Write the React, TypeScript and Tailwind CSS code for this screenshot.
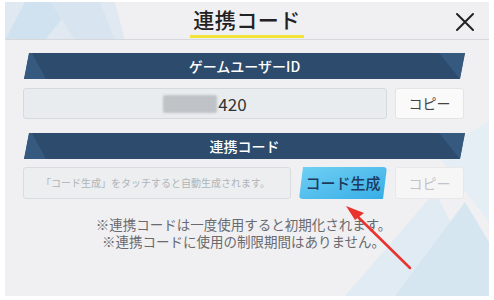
import React from "react";

const font = { fontFamily: '"Noto Sans CJK JP", "Noto Sans", sans-serif' };

function Bar({ label }: { label: string }) {
  return (
    <div className="relative h-[26px] ml-[1px] mr-[-1px] bg-[#2d4b6c] [clip-path:polygon(5px_0,100%_0,calc(100%-5px)_100%,0_100%)] flex items-center justify-center">
      <div className="absolute left-0 top-0 h-full w-[24px] bg-[#36597f] [clip-path:polygon(5px_0,8px_0,22px_100%,0_100%)]" />
      <div className="absolute right-0 top-0 h-full w-[26px] bg-[#36597f] [clip-path:polygon(0_0,100%_0,calc(100%-5px)_100%)]" />
      <span className="relative text-white text-[14px] leading-none font-medium">{label}</span>
    </div>
  );
}

export default function App() {
  return (
    <div className="relative w-[494px] h-[300px] bg-white overflow-hidden" style={font}>
      <div className="absolute left-[5px] top-[2px] w-[484px] h-[294px] bg-[#f0f0f2] overflow-hidden">
        <svg className="absolute inset-0" width="484" height="294" viewBox="0 0 484 294">
          <polygon points="0,0 110,0 120,38 0,38" fill="#e0e9f1" />
          <polygon points="20,0 70,0 40,38 0,38" fill="#d0e2ef" />
          <polygon points="45,0 95,0 110,38 70,38" fill="#d8e5f0" />
          <polygon points="340,294 430,190 484,294" fill="#e0ebf3" />
          <polygon points="390,294 460,200 484,240 484,294" fill="#d6e6f1" />
          <polygon points="430,150 484,120 484,220" fill="#e5eef5" />
        </svg>
        <div className="relative flex flex-col h-full">
          <div className="relative h-[38px] border-b border-[#d6d8dc] flex items-center justify-center">
            <div className="relative flex flex-col items-center">
              <span className="text-[21px] leading-none text-[#222] font-medium tracking-[0.5px] mt-[2px]">連携コード</span>
              <div className="w-[114px] h-[3px] bg-[#f2e33a] mt-[5px] mb-[-4px]" />
            </div>
            <svg className="absolute right-[14px] top-[10px]" width="20" height="20" viewBox="0 0 20 20">
              <path d="M2 2 L18 18 M18 2 L2 18" stroke="#222" strokeWidth="2" strokeLinecap="round" />
            </svg>
          </div>

          <div className="flex flex-col pl-[18px] pr-[25px] pt-[13px]">
            <Bar label="ゲームユーザーID" />
            <div className="flex gap-[8px] mt-[9px] h-[31px]">
              <div className="flex-1 bg-[#e9ecef] border border-[#d6dadd] rounded-[3px] flex items-center justify-center">
                <div className="w-[54px] h-[18px] bg-[#bfc3c7] rounded-[2px] mr-[1px] blur-[1px]" />
                <span className="text-[17px] text-[#333] leading-none">420</span>
              </div>
              <div className="w-[69px] bg-[#fafafa] border border-[#e4e4e6] rounded-[3px] flex items-center justify-center text-[14px] text-[#444]">
                コピー
              </div>
            </div>

            <div className="mt-[14px]">
              <Bar label="連携コード" />
            </div>
            <div className="flex gap-[8px] mt-[8px] h-[32px]">
              <div className="flex-1 bg-[#eceef0] border border-[#dadde0] rounded-[3px] flex items-center pl-[17px]">
                <span className="text-[10px] text-[#b0b4b8] leading-none">「コード生成」をタッチすると自動生成されます。</span>
              </div>
              <div className="w-[88px] bg-gradient-to-br from-[#6fd0f3] to-[#35ade6] rounded-[4px] [clip-path:polygon(4px_0,100%_0,calc(100%-4px)_100%,0_100%)] flex items-center justify-center text-[15px] text-[#1d3a5e] font-medium">
                コード生成
              </div>
              <div className="w-[69px] bg-[#f6f6f7] border border-[#e8e8ea] rounded-[3px] flex items-center justify-center text-[14px] text-[#c4c4c8]">
                コピー
              </div>
            </div>

            <div className="mt-[17px] flex flex-col items-center gap-[1px] text-[13.5px] leading-[16px] text-[#6a6a6e]">
              <span>※連携コードは一度使用すると初期化されます。</span>
              <span>※連携コードに使用の制限期間はありません。</span>
            </div>
          </div>
        </div>
      </div>
      <svg className="absolute inset-0 pointer-events-none" width="494" height="300" viewBox="0 0 494 300">
        <line x1="410" y1="268" x2="356" y2="215" stroke="#e8332f" strokeWidth="2.5" strokeLinecap="round" />
        <polygon points="346,206 364,213 355,220" fill="#e8332f" />
      </svg>
    </div>
  );
}
